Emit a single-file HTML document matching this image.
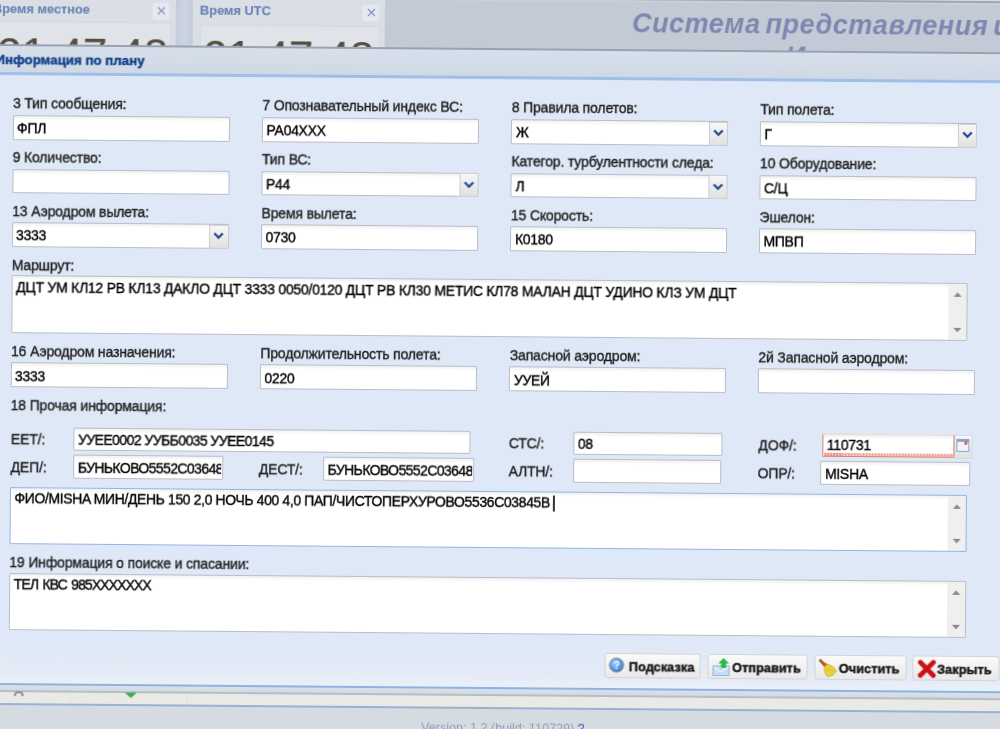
<!DOCTYPE html>
<html><head><meta charset="utf-8"><style>
html,body{margin:0;padding:0;width:1000px;height:729px;overflow:hidden;background:#d6dae1}
#root{position:absolute;left:0;top:0;width:1000px;height:729px;transform:rotate(0.4698deg);transform-origin:0 0;filter:blur(0.45px)}
#root div{position:absolute}
#root svg{position:absolute}
.t{font-family:"Liberation Sans", sans-serif;white-space:nowrap;-webkit-text-stroke:0.35px currentColor}
.f{background:linear-gradient(#f0f0f0,#fff 4px);border:1px solid #b9bec8;box-sizing:border-box;border-radius:1px}
.trig{background:linear-gradient(#f7f7f7,#e1e1e1);border:1px solid #c9ccd2;box-sizing:border-box}
.sb{background:#efefef}
.btn{background:linear-gradient(#fafafa,#e9e9e9);border:1px solid #d2d4d8;box-sizing:border-box;border-radius:3px}
</style></head><body><div id="root">
<div style="left:-20.0px;top:-30.0px;width:1060.0px;height:80.0px;background:#c2cad5"></div>
<div style="left:385.0px;top:-30.0px;width:700.0px;height:23.4px;background:#d5dae2"></div>
<div style="left:385.0px;top:-6.6px;width:700.0px;height:1.6px;background:#9ea6b2"></div>
<div style="left:385.0px;top:-5.0px;width:700.0px;height:1.5px;background:#c9d0da"></div>
<div style="left:176.2px;top:-30.0px;width:17.0px;height:80.0px;background:linear-gradient(90deg,#c3ccd8,#cbd4df 50%,#c3ccd8)"></div>
<div style="left:-20.0px;top:-30.0px;width:196.2px;height:80.0px;background:#dadee5"></div>
<div style="left:-20.0px;top:20.6px;width:190.0px;height:40.0px;background:#e0e3e8;border:1.5px solid #d2dae6"></div>
<div style="left:192.5px;top:-30.0px;width:192.0px;height:80.0px;background:#dadee5"></div>
<div style="left:200.0px;top:22.6px;width:178.0px;height:40.0px;background:#e0e3e8;border:1.5px solid #d2dae6"></div>
<div class="t" style="left:-7.0px;top:2.5px;font-size:12.8px;line-height:12.8px;font-weight:700;color:#6f87b6;-webkit-text-stroke:0.2px currentColor">Время местное</div>
<div class="t" style="left:200.1px;top:2.7px;font-size:12.8px;line-height:12.8px;font-weight:700;color:#6f87b6;-webkit-text-stroke:0.2px currentColor">Время UTC</div>
<div style="left:153.0px;top:1.6px;width:16px;height:16px;background:#e6eaf0;border-radius:2px;box-shadow:0 0 0 1px #dde2ea"></div>
<svg style="position:absolute;left:156.5px;top:5.1px" width="9" height="9" viewBox="0 0 9 9"><path d="M1 1L8 8M8 1L1 8" stroke="#8a92c8" stroke-width="1.3"/></svg>
<div style="left:363.0px;top:1.6px;width:16px;height:16px;background:#e6eaf0;border-radius:2px;box-shadow:0 0 0 1px #dde2ea"></div>
<svg style="position:absolute;left:366.5px;top:5.1px" width="9" height="9" viewBox="0 0 9 9"><path d="M1 1L8 8M8 1L1 8" stroke="#8a92c8" stroke-width="1.3"/></svg>
<div style="left:-20px;top:22.1px;width:190px;height:40px;overflow:hidden"><div class="t" style="left:17.5px;top:9.7px;font-size:44px;line-height:44px;font-weight:400;color:#574e42;-webkit-text-stroke:0.1px #574e42">21:47:48</div></div>
<div style="left:201px;top:23.6px;width:177px;height:40px;overflow:hidden"><div class="t" style="left:2.5px;top:9px;font-size:44px;line-height:44px;font-weight:400;color:#574e42;-webkit-text-stroke:0.1px #574e42">21:47:48</div></div>
<div class="t" style="left:632.2px;top:5.1px;font-size:27px;line-height:27px;font-weight:700;color:#7f87b0;font-style:italic;letter-spacing:0.55px;word-spacing:-3px;-webkit-text-stroke:0">Система представления и</div>
<div class="t" style="left:786.0px;top:37.1px;font-size:27px;line-height:27px;font-weight:700;color:#7f87b0;font-style:italic;-webkit-text-stroke:0">И</div>
<div style="left:-20.0px;top:44.9px;width:1060.0px;height:640.0px;background:#dfe8f6"></div>
<div style="left:-20.0px;top:44.2px;width:1060.0px;height:1.4px;background:#97a3b3"></div>
<div style="left:-20.0px;top:45.6px;width:1060.0px;height:27.0px;background:linear-gradient(#d6dfea,#cfd9e5)"></div>
<div style="left:-20.0px;top:72.4px;width:1060.0px;height:2.2px;background:#9fbfe8"></div>
<div class="t" style="left:-4.0px;top:52.6px;font-size:13.3px;line-height:13.3px;font-weight:700;color:#15428b;-webkit-text-stroke:0.45px currentColor">Информация по плану</div>
<div style="left:-20.0px;top:640.0px;width:1060.0px;height:43.0px;background:linear-gradient(#dfe8f6,#e4ebf7 70%,#eaf0f9)"></div>
<div style="left:-20.0px;top:682.6px;width:1060.0px;height:2.2px;background:#8eb2e2"></div>
<div style="left:-20.0px;top:684.8px;width:1060.0px;height:60.0px;background:#d6dae1"></div>
<div style="left:-20.0px;top:684.8px;width:1060.0px;height:6.0px;background:linear-gradient(#d8e0ea,#d2d9e3)"></div>
<div style="left:-20.0px;top:689.8px;width:1060.0px;height:2.6px;background:linear-gradient(#c2cad4,#a8b1bd 60%,#c8ccd0)"></div>
<div style="left:-20.0px;top:692.0px;width:1060.0px;height:11.5px;background:#e9e9e6"></div>
<div style="left:-20.0px;top:703.4px;width:1060.0px;height:1.6px;background:#99b1d3"></div>
<svg style="position:absolute;left:19px;top:689.5px" width="11" height="7" viewBox="0 0 11 7"><path d="M1.5 6Q1.5 2 5.5 2Q9.5 2 9.5 6" fill="none" stroke="#8c9199" stroke-width="2"/></svg>
<svg style="position:absolute;left:129.5px;top:691px" width="13" height="6" viewBox="0 0 13 6"><path d="M0.5 0.5H12.5L6.5 6Z" fill="#3fae4f"/></svg>
<div style="left:76px;top:692px;width:1px;height:11px;background:#e2e2de"></div>
<div style="left:192px;top:692px;width:1px;height:11px;background:#e2e2de"></div>
<div class="t" style="left:427.0px;top:717.8px;font-size:12.6px;line-height:12.6px;font-weight:400;color:#929cb6;-webkit-text-stroke:0">Version: 1.2 (build: 110729) <span style='color:#4b4bd0'>?</span></div>
<div class="t" style="left:13.9px;top:95.6px;font-size:14px;line-height:14px;font-weight:400;color:#1e1e1e;transform:scaleY(1.1);transform-origin:0 11.85px;letter-spacing:-0.15px">3 Тип сообщения:</div>
<div class="f" style="left:13.6px;top:115.0px;width:217.0px;height:24.5px;border-color:#b9bec8;overflow:hidden"><div class="t" style="left:3.5px;top:4.3px;font-size:14px;line-height:16px;color:#000;width:210.5px;overflow:hidden;letter-spacing:-0.3px;transform:scaleY(1.1);transform-origin:0 12.85px">ФПЛ</div></div>
<div class="t" style="left:263.3px;top:95.6px;font-size:14px;line-height:14px;font-weight:400;color:#1e1e1e;transform:scaleY(1.1);transform-origin:0 11.85px;letter-spacing:-0.15px">7 Опознавательный индекс ВС:</div>
<div class="f" style="left:263.0px;top:115.0px;width:217.0px;height:24.5px;border-color:#b9bec8;overflow:hidden"><div class="t" style="left:3.5px;top:4.3px;font-size:14px;line-height:16px;color:#000;width:210.5px;overflow:hidden;letter-spacing:-0.3px;transform:scaleY(1.1);transform-origin:0 12.85px">РА04XXX</div></div>
<div class="t" style="left:512.7px;top:95.6px;font-size:14px;line-height:14px;font-weight:400;color:#1e1e1e;transform:scaleY(1.1);transform-origin:0 11.85px;letter-spacing:-0.15px">8 Правила полетов:</div>
<div class="f" style="left:512.4px;top:115.0px;width:217.0px;height:24.5px;border-color:#b9bec8;overflow:hidden"><div class="t" style="left:3.5px;top:4.3px;font-size:14px;line-height:16px;color:#000;width:191.0px;overflow:hidden;letter-spacing:-0.3px;transform:scaleY(1.1);transform-origin:0 12.85px">Ж</div></div>
<div class="trig" style="left:709.9px;top:115.5px;width:19.5px;height:24.0px"></div>
<svg style="position:absolute;left:714.1px;top:123.3px" width="11" height="8" viewBox="0 0 11 8"><path d="M1.2 1.5L5.5 5.8L9.8 1.5" fill="none" stroke="#2a4d92" stroke-width="2.4"/></svg>
<div class="t" style="left:761.3px;top:95.6px;font-size:14px;line-height:14px;font-weight:400;color:#1e1e1e;transform:scaleY(1.1);transform-origin:0 11.85px;letter-spacing:-0.15px">Тип полета:</div>
<div class="f" style="left:761.0px;top:115.0px;width:217.0px;height:24.5px;border-color:#b9bec8;overflow:hidden"><div class="t" style="left:3.5px;top:4.3px;font-size:14px;line-height:16px;color:#000;width:191.0px;overflow:hidden;letter-spacing:-0.3px;transform:scaleY(1.1);transform-origin:0 12.85px">Г</div></div>
<div class="trig" style="left:958.5px;top:115.5px;width:19.5px;height:24.0px"></div>
<svg style="position:absolute;left:962.7px;top:123.3px" width="11" height="8" viewBox="0 0 11 8"><path d="M1.2 1.5L5.5 5.8L9.8 1.5" fill="none" stroke="#2a4d92" stroke-width="2.4"/></svg>
<div class="t" style="left:13.9px;top:150.2px;font-size:14px;line-height:14px;font-weight:400;color:#1e1e1e;transform:scaleY(1.1);transform-origin:0 11.85px;letter-spacing:-0.15px">9 Количество:</div>
<div class="f" style="left:13.6px;top:168.6px;width:217.0px;height:24.5px;border-color:#b9bec8;overflow:hidden"></div>
<div class="t" style="left:263.3px;top:150.2px;font-size:14px;line-height:14px;font-weight:400;color:#1e1e1e;transform:scaleY(1.1);transform-origin:0 11.85px;letter-spacing:-0.15px">Тип ВС:</div>
<div class="f" style="left:263.0px;top:168.6px;width:217.0px;height:24.5px;border-color:#b9bec8;overflow:hidden"><div class="t" style="left:3.5px;top:4.3px;font-size:14px;line-height:16px;color:#000;width:191.0px;overflow:hidden;letter-spacing:-0.3px;transform:scaleY(1.1);transform-origin:0 12.85px">Р44</div></div>
<div class="trig" style="left:460.5px;top:169.1px;width:19.5px;height:24.0px"></div>
<svg style="position:absolute;left:464.7px;top:176.9px" width="11" height="8" viewBox="0 0 11 8"><path d="M1.2 1.5L5.5 5.8L9.8 1.5" fill="none" stroke="#2a4d92" stroke-width="2.4"/></svg>
<div class="t" style="left:512.7px;top:150.2px;font-size:14px;line-height:14px;font-weight:400;color:#1e1e1e;transform:scaleY(1.1);transform-origin:0 11.85px;letter-spacing:-0.15px">Категор. турбулентности следа:</div>
<div class="f" style="left:512.4px;top:168.6px;width:217.0px;height:24.5px;border-color:#b9bec8;overflow:hidden"><div class="t" style="left:3.5px;top:4.3px;font-size:14px;line-height:16px;color:#000;width:191.0px;overflow:hidden;letter-spacing:-0.3px;transform:scaleY(1.1);transform-origin:0 12.85px">Л</div></div>
<div class="trig" style="left:709.9px;top:169.1px;width:19.5px;height:24.0px"></div>
<svg style="position:absolute;left:714.1px;top:176.9px" width="11" height="8" viewBox="0 0 11 8"><path d="M1.2 1.5L5.5 5.8L9.8 1.5" fill="none" stroke="#2a4d92" stroke-width="2.4"/></svg>
<div class="t" style="left:761.3px;top:150.2px;font-size:14px;line-height:14px;font-weight:400;color:#1e1e1e;transform:scaleY(1.1);transform-origin:0 11.85px;letter-spacing:-0.15px">10 Оборудование:</div>
<div class="f" style="left:761.0px;top:168.6px;width:217.0px;height:24.5px;border-color:#b9bec8;overflow:hidden"><div class="t" style="left:3.5px;top:4.3px;font-size:14px;line-height:16px;color:#000;width:210.5px;overflow:hidden;letter-spacing:-0.3px;transform:scaleY(1.1);transform-origin:0 12.85px">С/Ц</div></div>
<div class="t" style="left:13.9px;top:203.7px;font-size:14px;line-height:14px;font-weight:400;color:#1e1e1e;transform:scaleY(1.1);transform-origin:0 11.85px;letter-spacing:-0.15px">13 Аэродром вылета:</div>
<div class="f" style="left:13.6px;top:222.1px;width:217.0px;height:24.5px;border-color:#b9bec8;overflow:hidden"><div class="t" style="left:3.5px;top:4.3px;font-size:14px;line-height:16px;color:#000;width:191.0px;overflow:hidden;letter-spacing:-0.3px;transform:scaleY(1.1);transform-origin:0 12.85px">3333</div></div>
<div class="trig" style="left:211.1px;top:222.6px;width:19.5px;height:24.0px"></div>
<svg style="position:absolute;left:215.3px;top:230.4px" width="11" height="8" viewBox="0 0 11 8"><path d="M1.2 1.5L5.5 5.8L9.8 1.5" fill="none" stroke="#2a4d92" stroke-width="2.4"/></svg>
<div class="t" style="left:263.3px;top:203.7px;font-size:14px;line-height:14px;font-weight:400;color:#1e1e1e;transform:scaleY(1.1);transform-origin:0 11.85px;letter-spacing:-0.15px">Время вылета:</div>
<div class="f" style="left:263.0px;top:222.1px;width:217.0px;height:24.5px;border-color:#b9bec8;overflow:hidden"><div class="t" style="left:3.5px;top:4.3px;font-size:14px;line-height:16px;color:#000;width:210.5px;overflow:hidden;letter-spacing:-0.3px;transform:scaleY(1.1);transform-origin:0 12.85px">0730</div></div>
<div class="t" style="left:512.7px;top:203.7px;font-size:14px;line-height:14px;font-weight:400;color:#1e1e1e;transform:scaleY(1.1);transform-origin:0 11.85px;letter-spacing:-0.15px">15 Скорость:</div>
<div class="f" style="left:512.4px;top:222.1px;width:217.0px;height:24.5px;border-color:#b9bec8;overflow:hidden"><div class="t" style="left:3.5px;top:4.3px;font-size:14px;line-height:16px;color:#000;width:210.5px;overflow:hidden;letter-spacing:-0.3px;transform:scaleY(1.1);transform-origin:0 12.85px">К0180</div></div>
<div class="t" style="left:761.3px;top:203.7px;font-size:14px;line-height:14px;font-weight:400;color:#1e1e1e;transform:scaleY(1.1);transform-origin:0 11.85px;letter-spacing:-0.15px">Эшелон:</div>
<div class="f" style="left:761.0px;top:222.1px;width:217.0px;height:24.5px;border-color:#b9bec8;overflow:hidden"><div class="t" style="left:3.5px;top:4.3px;font-size:14px;line-height:16px;color:#000;width:210.5px;overflow:hidden;letter-spacing:-0.3px;transform:scaleY(1.1);transform-origin:0 12.85px">МПВП</div></div>
<div class="t" style="left:13.9px;top:257.9px;font-size:14px;line-height:14px;font-weight:400;color:#1e1e1e;transform:scaleY(1.1);transform-origin:0 11.85px;letter-spacing:-0.15px">Маршрут:</div>
<div class="f" style="left:13.6px;top:275.4px;width:956.5px;height:57.6px;border-color:#b9bec8"></div>
<div class="sb" style="left:951.1px;top:276.4px;width:18px;height:55.6px"></div>
<svg style="position:absolute;left:956.1px;top:284.4px" width="8" height="5" viewBox="0 0 8 5"><path d="M0 5L4 0.5L8 5Z" fill="#8a8a8a"/></svg>
<svg style="position:absolute;left:956.1px;top:320.0px" width="8" height="5" viewBox="0 0 8 5"><path d="M0 0L4 4.5L8 0Z" fill="#8a8a8a"/></svg>
<div class="t" style="left:18.6px;top:279.8px;font-size:14px;line-height:14px;font-weight:400;color:#000;transform:scaleY(1.1);transform-origin:0 11.85px;letter-spacing:-0.26px;word-spacing:0px">ДЦТ УМ КЛ12 РВ КЛ13 ДАКЛО ДЦТ 3333 0050/0120 ДЦТ РВ КЛ30 МЕТИС КЛ78 МАЛАН ДЦТ УДИНО КЛЗ УМ ДЦТ</div>
<div class="t" style="left:13.9px;top:343.9px;font-size:14px;line-height:14px;font-weight:400;color:#1e1e1e;transform:scaleY(1.1);transform-origin:0 11.85px;letter-spacing:-0.15px">16 Аэродром назначения:</div>
<div class="f" style="left:13.6px;top:362.3px;width:217.0px;height:24.5px;border-color:#b9bec8;overflow:hidden"><div class="t" style="left:3.5px;top:4.3px;font-size:14px;line-height:16px;color:#000;width:210.5px;overflow:hidden;letter-spacing:-0.3px;transform:scaleY(1.1);transform-origin:0 12.85px">3333</div></div>
<div class="t" style="left:263.3px;top:343.9px;font-size:14px;line-height:14px;font-weight:400;color:#1e1e1e;transform:scaleY(1.1);transform-origin:0 11.85px;letter-spacing:-0.15px">Продолжительность полета:</div>
<div class="f" style="left:263.0px;top:362.3px;width:217.0px;height:24.5px;border-color:#b9bec8;overflow:hidden"><div class="t" style="left:3.5px;top:4.3px;font-size:14px;line-height:16px;color:#000;width:210.5px;overflow:hidden;letter-spacing:-0.3px;transform:scaleY(1.1);transform-origin:0 12.85px">0220</div></div>
<div class="t" style="left:512.7px;top:343.9px;font-size:14px;line-height:14px;font-weight:400;color:#1e1e1e;transform:scaleY(1.1);transform-origin:0 11.85px;letter-spacing:-0.15px">Запасной аэродром:</div>
<div class="f" style="left:512.4px;top:362.3px;width:217.0px;height:24.5px;border-color:#b9bec8;overflow:hidden"><div class="t" style="left:3.5px;top:4.3px;font-size:14px;line-height:16px;color:#000;width:210.5px;overflow:hidden;letter-spacing:-0.3px;transform:scaleY(1.1);transform-origin:0 12.85px">УУЕЙ</div></div>
<div class="t" style="left:761.3px;top:343.9px;font-size:14px;line-height:14px;font-weight:400;color:#1e1e1e;transform:scaleY(1.1);transform-origin:0 11.85px;letter-spacing:-0.15px">2й Запасной аэродром:</div>
<div class="f" style="left:761.0px;top:362.3px;width:217.0px;height:24.5px;border-color:#b9bec8;overflow:hidden"></div>
<div class="t" style="left:13.9px;top:397.6px;font-size:14px;line-height:14px;font-weight:400;color:#1e1e1e;transform:scaleY(1.1);transform-origin:0 11.85px;letter-spacing:-0.15px">18 Прочая информация:</div>
<div class="t" style="left:14.5px;top:432.4px;font-size:14px;line-height:14px;font-weight:400;color:#1e1e1e;transform:scaleY(1.1);transform-origin:0 11.85px;letter-spacing:-0.15px">ЕЕТ/:</div>
<div class="f" style="left:77.2px;top:426.8px;width:397.0px;height:22.8px;border-color:#b9bec8;overflow:hidden"><div class="t" style="left:3.5px;top:3.6px;font-size:14px;line-height:16px;color:#000;width:390.5px;overflow:hidden;letter-spacing:-0.57px;transform:scaleY(1.1);transform-origin:0 12.85px">УУЕЕ0002 УУББ0035 УУЕЕ0145</div></div>
<div class="t" style="left:512.4px;top:432.4px;font-size:14px;line-height:14px;font-weight:400;color:#1e1e1e;transform:scaleY(1.1);transform-origin:0 11.85px;letter-spacing:-0.15px">СТС/:</div>
<div class="f" style="left:577.0px;top:426.8px;width:149.0px;height:22.8px;border-color:#b9bec8;overflow:hidden"><div class="t" style="left:3.5px;top:3.6px;font-size:14px;line-height:16px;color:#000;width:142.5px;overflow:hidden;letter-spacing:-0.3px;transform:scaleY(1.1);transform-origin:0 12.85px">08</div></div>
<div class="t" style="left:762.1px;top:432.4px;font-size:14px;line-height:14px;font-weight:400;color:#1e1e1e;transform:scaleY(1.1);transform-origin:0 11.85px;letter-spacing:-0.15px">ДОФ/:</div>
<div class="f" style="left:826px;top:426.8px;width:132px;height:23.5px;border-color:#f3d6d0 #e0806c #e0806c #e0806c;border-width:1px 1.5px 1px 1.5px"></div>
<div style="left:827.5px;top:445.8px;width:129px;height:3.5px;background:repeating-linear-gradient(90deg,#e9806e 0 1.5px,#fbe3de 1.5px 3px)"></div>
<div style="left:827.5px;top:447.3px;width:129px;height:1px;background:#f2b0a4"></div>
<div class="t" style="left:830.5px;top:431.4px;font-size:14px;line-height:14px;font-weight:400;color:#000;transform:scaleY(1.1);transform-origin:0 11.85px;letter-spacing:-0.3px">110731</div>
<div class="trig" style="left:958px;top:427.3px;width:17.5px;height:23.5px;border-color:#d8dade"></div>
<div style="left:960px;top:430.8px;width:13px;height:13px;box-sizing:border-box;border:1.5px solid #8aa4cc;border-top-width:3px;background:#f2f4f8"></div>
<div style="left:967.5px;top:433.3px;width:3.5px;height:3.5px;background:#e05a5a;border-radius:2px"></div>
<div class="t" style="left:14.5px;top:459.5px;font-size:14px;line-height:14px;font-weight:400;color:#1e1e1e;transform:scaleY(1.1);transform-origin:0 11.85px;letter-spacing:-0.15px">ДЕП/:</div>
<div class="f" style="left:77.2px;top:454.2px;width:150.0px;height:23.5px;border-color:#b9bec8;overflow:hidden"><div class="t" style="left:3.5px;top:4.1px;font-size:14px;line-height:16px;color:#000;width:143.5px;overflow:hidden;letter-spacing:-0.6px;transform:scaleY(1.1);transform-origin:0 12.85px">БУНЬКОВО5552С03648</div></div>
<div class="t" style="left:262.7px;top:459.5px;font-size:14px;line-height:14px;font-weight:400;color:#1e1e1e;transform:scaleY(1.1);transform-origin:0 11.85px;letter-spacing:-0.15px">ДЕСТ/:</div>
<div class="f" style="left:327.0px;top:454.2px;width:150.5px;height:23.5px;border-color:#b9bec8;overflow:hidden"><div class="t" style="left:3.5px;top:4.1px;font-size:14px;line-height:16px;color:#000;width:144.0px;overflow:hidden;letter-spacing:-0.6px;transform:scaleY(1.1);transform-origin:0 12.85px">БУНЬКОВО5552С03648</div></div>
<div class="t" style="left:512.4px;top:459.5px;font-size:14px;line-height:14px;font-weight:400;color:#1e1e1e;transform:scaleY(1.1);transform-origin:0 11.85px;letter-spacing:-0.15px">АЛТН/:</div>
<div class="f" style="left:576.6px;top:454.2px;width:148.0px;height:23.5px;border-color:#b9bec8;overflow:hidden"></div>
<div class="t" style="left:761.5px;top:459.5px;font-size:14px;line-height:14px;font-weight:400;color:#1e1e1e;transform:scaleY(1.1);transform-origin:0 11.85px;letter-spacing:-0.15px">ОПР/:</div>
<div class="f" style="left:824.4px;top:454.2px;width:150.0px;height:23.5px;border-color:#b9bec8;overflow:hidden"><div class="t" style="left:3.5px;top:3.6px;font-size:14px;line-height:16px;color:#000;width:143.5px;overflow:hidden;letter-spacing:-0.3px;transform:scaleY(1.1);transform-origin:0 12.85px">MISHA</div></div>
<div class="f" style="left:13.6px;top:487.0px;width:957.0px;height:56.5px;border-color:#93b6e4"></div>
<div class="sb" style="left:951.6px;top:488.0px;width:18px;height:54.5px"></div>
<svg style="position:absolute;left:956.6px;top:496.0px" width="8" height="5" viewBox="0 0 8 5"><path d="M0 5L4 0.5L8 5Z" fill="#8a8a8a"/></svg>
<svg style="position:absolute;left:956.6px;top:530.5px" width="8" height="5" viewBox="0 0 8 5"><path d="M0 0L4 4.5L8 0Z" fill="#8a8a8a"/></svg>
<div class="t" style="left:18.6px;top:491.4px;font-size:14px;line-height:14px;font-weight:400;color:#000;transform:scaleY(1.1);transform-origin:0 11.85px;letter-spacing:-0.38px;word-spacing:0px">ФИО/MISHA МИН/ДЕНЬ 150 2,0 НОЧЬ 400 4,0 ПАП/ЧИСТОПЕРХУРОВО5536С03845В</div>
<div style="left:557.4px;top:490.5px;width:1.2px;height:16px;background:#333"></div>
<div class="t" style="left:13.9px;top:554.7px;font-size:14px;line-height:14px;font-weight:400;color:#1e1e1e;transform:scaleY(1.1);transform-origin:0 11.85px;letter-spacing:-0.15px">19 Информация о поиске и спасании:</div>
<div class="f" style="left:13.6px;top:573.1px;width:957.0px;height:56.5px;border-color:#b9bec8"></div>
<div class="sb" style="left:951.6px;top:574.1px;width:18px;height:54.5px"></div>
<svg style="position:absolute;left:956.6px;top:582.1px" width="8" height="5" viewBox="0 0 8 5"><path d="M0 5L4 0.5L8 5Z" fill="#8a8a8a"/></svg>
<svg style="position:absolute;left:956.6px;top:616.6px" width="8" height="5" viewBox="0 0 8 5"><path d="M0 0L4 4.5L8 0Z" fill="#8a8a8a"/></svg>
<div class="t" style="left:18.6px;top:576.8px;font-size:14px;line-height:14px;font-weight:400;color:#000;transform:scaleY(1.1);transform-origin:0 11.85px;letter-spacing:-0.9px;word-spacing:1.3px">ТЕЛ КВС 985XXXXXXX</div>
<div class="btn" style="left:609.8px;top:648.3px;width:96.6px;height:24.7px"></div>
<svg style="position:absolute;left:614.3px;top:651.8px" width="16" height="16" viewBox="0 0 16 16"><defs><radialGradient id="hg" cx="0.4" cy="0.35" r="0.7"><stop offset="0" stop-color="#9fd0ff"/><stop offset="1" stop-color="#2f74d0"/></radialGradient></defs><circle cx="8" cy="8" r="7.1" fill="url(#hg)" stroke="#8d8d8d" stroke-width="1"/><text x="8" y="12" font-size="10" font-family="Liberation Sans" font-weight="700" fill="#eef6ff" text-anchor="middle">?</text></svg>
<div class="t" style="left:634.3px;top:655.9px;font-size:12.8px;line-height:12.8px;font-weight:700;color:#1a1a1a;-webkit-text-stroke:0.5px currentColor">Подсказка</div>
<div class="btn" style="left:713.0px;top:648.3px;width:100.2px;height:24.7px"></div>
<svg style="position:absolute;left:717.5px;top:651.8px" width="18" height="18" viewBox="0 0 18 18"><rect x="0.5" y="8" width="16" height="9.5" fill="#c8ddf5" stroke="#8fb4e0"/><path d="M1 9L8.5 14L16 9" fill="none" stroke="#fff" stroke-width="1"/><path d="M11 0L16.5 5.5H13.5V10H8.5V5.5H5.5Z" fill="#2fb84a"/></svg>
<div class="t" style="left:737.5px;top:655.9px;font-size:12.8px;line-height:12.8px;font-weight:700;color:#1a1a1a;-webkit-text-stroke:0.5px currentColor">Отправить</div>
<div class="btn" style="left:819.8px;top:648.3px;width:91.8px;height:24.7px"></div>
<svg style="position:absolute;left:824.3px;top:651.8px" width="20" height="19" viewBox="0 0 20 19"><path d="M1.8 1.8L5.2 5.2" stroke="#9a5a2c" stroke-width="3" stroke-linecap="round"/><path d="M4 6.5L6.8 3.8L9 5.6L6 8.6Z" fill="#d9582c"/><path d="M5.8 8.4L8.9 5.4Q15.5 6.8 17.8 12.2Q14.5 17.6 8.8 17.6Q5.2 13.5 5.8 8.4Z" fill="#e8d43c" stroke="#c9ab22" stroke-width="0.8"/><path d="M8 10L14 15M9.5 8.5L16 13" stroke="#d2b62a" stroke-width="0.7"/></svg>
<div class="t" style="left:844.3px;top:655.9px;font-size:12.8px;line-height:12.8px;font-weight:700;color:#1a1a1a;-webkit-text-stroke:0.5px currentColor">Очистить</div>
<div class="btn" style="left:918.1px;top:648.3px;width:86.8px;height:24.7px"></div>
<svg style="position:absolute;left:922.6px;top:651.8px" width="19" height="19" viewBox="0 0 19 19"><path d="M2.8 2.8L15.8 15.8M15.8 2.8L2.8 15.8" stroke="#d01018" stroke-width="4.8" stroke-linecap="round"/></svg>
<div class="t" style="left:942.6px;top:655.9px;font-size:12.8px;line-height:12.8px;font-weight:700;color:#1a1a1a;-webkit-text-stroke:0.5px currentColor">Закрыть</div>
</div></body></html>
